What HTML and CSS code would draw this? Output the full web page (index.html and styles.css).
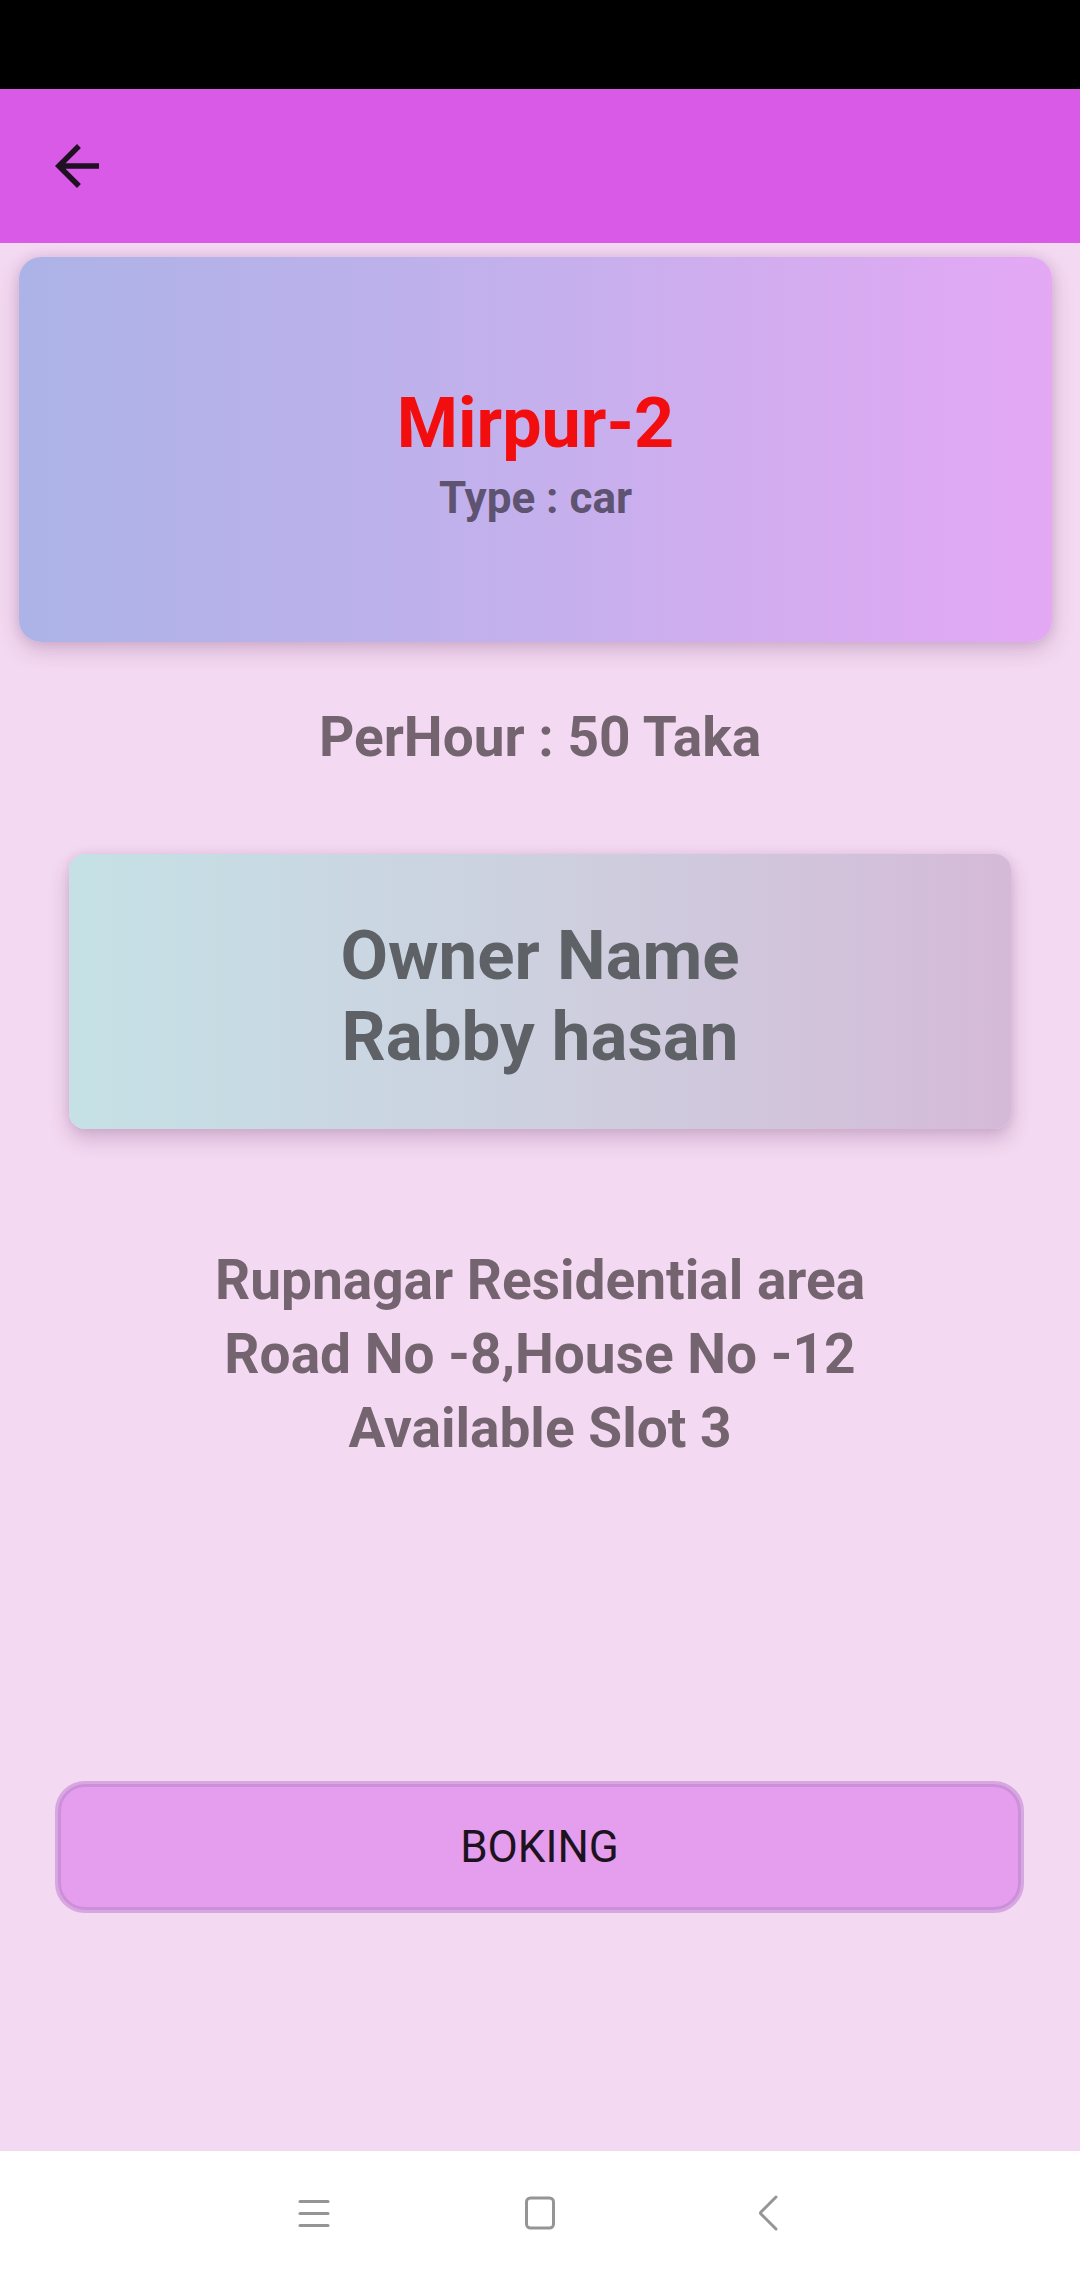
FILE: index.html
```html
<!DOCTYPE html>
<html>
<head>
<meta charset="utf-8">
<link rel="stylesheet" href="styles.css">
</head>
<body>
<div class="screen">
  <div class="status-bar"></div>
  <div class="app-bar">
    <svg class="back" viewBox="0 0 24 24" width="66" height="66"><path d="M20 11H7.83l5.59-5.59L12 4l-8 8 8 8 1.41-1.41L7.83 13H20v-2z" fill="#1f1022"/></svg>
  </div>
  <main class="content">
    <div class="place-card">
      <div class="place-title">Mirpur-2</div>
      <div class="place-type">Type : car</div>
    </div>
    <div class="rate">PerHour : 50 Taka</div>
    <div class="owner-card">
      <div class="owner-text">Owner Name<br>Rabby hasan</div>
    </div>
    <div class="address">Rupnagar Residential area<br>Road No -8,House No -12<br>Available Slot 3</div>
    <button class="book-btn">BOKING</button>
  </main>
  <nav class="nav-bar">
    <svg class="nav-icon" viewBox="0 0 40 40" width="40" height="40">
      <g stroke="#959595" stroke-width="3" stroke-linecap="round">
        <line x1="6" y1="7.5" x2="34" y2="7.5"/>
        <line x1="6" y1="19.5" x2="34" y2="19.5"/>
        <line x1="6" y1="31.5" x2="34" y2="31.5"/>
      </g>
    </svg>
    <svg class="nav-icon" viewBox="0 0 40 40" width="40" height="40">
      <rect x="6.5" y="4" width="27" height="30" rx="4" fill="none" stroke="#959595" stroke-width="3"/>
    </svg>
    <svg class="nav-icon" viewBox="0 0 40 40" width="40" height="40">
      <path d="M30 3 L15 18 Q14 19 15 20 L30 35" fill="none" stroke="#959595" stroke-width="3" stroke-linecap="round" stroke-linejoin="round"/>
    </svg>
  </nav>
</div>
</body>
</html>
```
FILE: styles.css
```css
* { box-sizing: border-box; }
html, body { margin: 0; padding: 0; }
body {
  width: 1080px;
  height: 2280px;
  font-family: Roboto, "Liberation Sans", sans-serif;
  overflow: hidden;
}
.screen {
  display: flex;
  flex-direction: column;
  width: 1080px;
  height: 2280px;
}
.status-bar {
  height: 89px;
  background: #000;
  flex: none;
}
.app-bar {
  height: 154px;
  background: #d85ae6;
  flex: none;
  display: flex;
  align-items: center;
  padding-left: 44px;
}
.back { display: block; }
.content {
  flex: 1;
  background: #f4d9f2;
  display: flex;
  flex-direction: column;
  align-items: center;
}
.place-card {
  align-self: stretch;
  margin: 14px 28px 0 19px;
  height: 385px;
  border-radius: 22px;
  background: linear-gradient(90deg, #acb3e7 0%, #c4b0ec 50%, #e4a8f4 100%);
  box-shadow: 0 8px 22px rgba(90, 40, 90, 0.22), 0 0 12px rgba(90, 40, 90, 0.12);
  display: flex;
  flex-direction: column;
  align-items: center;
  justify-content: center;
  padding-top: 6px;
}
.place-title {
  font-size: 70px;
  line-height: 84px;
  font-weight: 700;
  color: #f20d0f;
}
.place-type {
  margin-top: 7px;
  font-size: 44px;
  line-height: 52px;
  font-weight: 700;
  color: #5e5371;
}
.rate {
  margin-top: 63px;
  font-size: 55px;
  line-height: 64px;
  font-weight: 700;
  color: #74646f;
}
.owner-card {
  margin-top: 85px;
  width: 942px;
  height: 275px;
  border-radius: 16px;
  background: linear-gradient(90deg, #c5e1e6 0%, #cdd0df 50%, #d5bad8 100%);
  box-shadow: 0 10px 20px rgba(90, 40, 90, 0.24), 0 0 8px rgba(90, 40, 90, 0.1);
  display: flex;
  align-items: center;
  justify-content: center;
}
.owner-text {
  font-size: 69px;
  line-height: 81px;
  font-weight: 700;
  color: #5e6166;
  text-align: center;
  margin-top: 8px;
}
.address {
  margin-top: 114px;
  font-size: 55px;
  line-height: 74px;
  font-weight: 700;
  color: #74646f;
  text-align: center;
}
.book-btn {
  margin-top: 316px;
  width: 969px;
  height: 132px;
  margin-left: -1px;
  border-radius: 30px;
  background: #e49eed;
  border: 3px solid #d7a7e0;
  box-shadow: inset 0 0 0 3px #cc8fd9;
  font-family: Roboto, "Liberation Sans", sans-serif;
  font-size: 44px;
  font-weight: 400;
  color: #1d1320;
  letter-spacing: 0;
  padding: 0;
}
.nav-bar {
  height: 129px;
  flex: none;
  background: #fff;
  display: flex;
  align-items: center;
  justify-content: center;
  gap: 186px;
  padding-bottom: 4px;
}
.nav-icon { display: block; }
```
